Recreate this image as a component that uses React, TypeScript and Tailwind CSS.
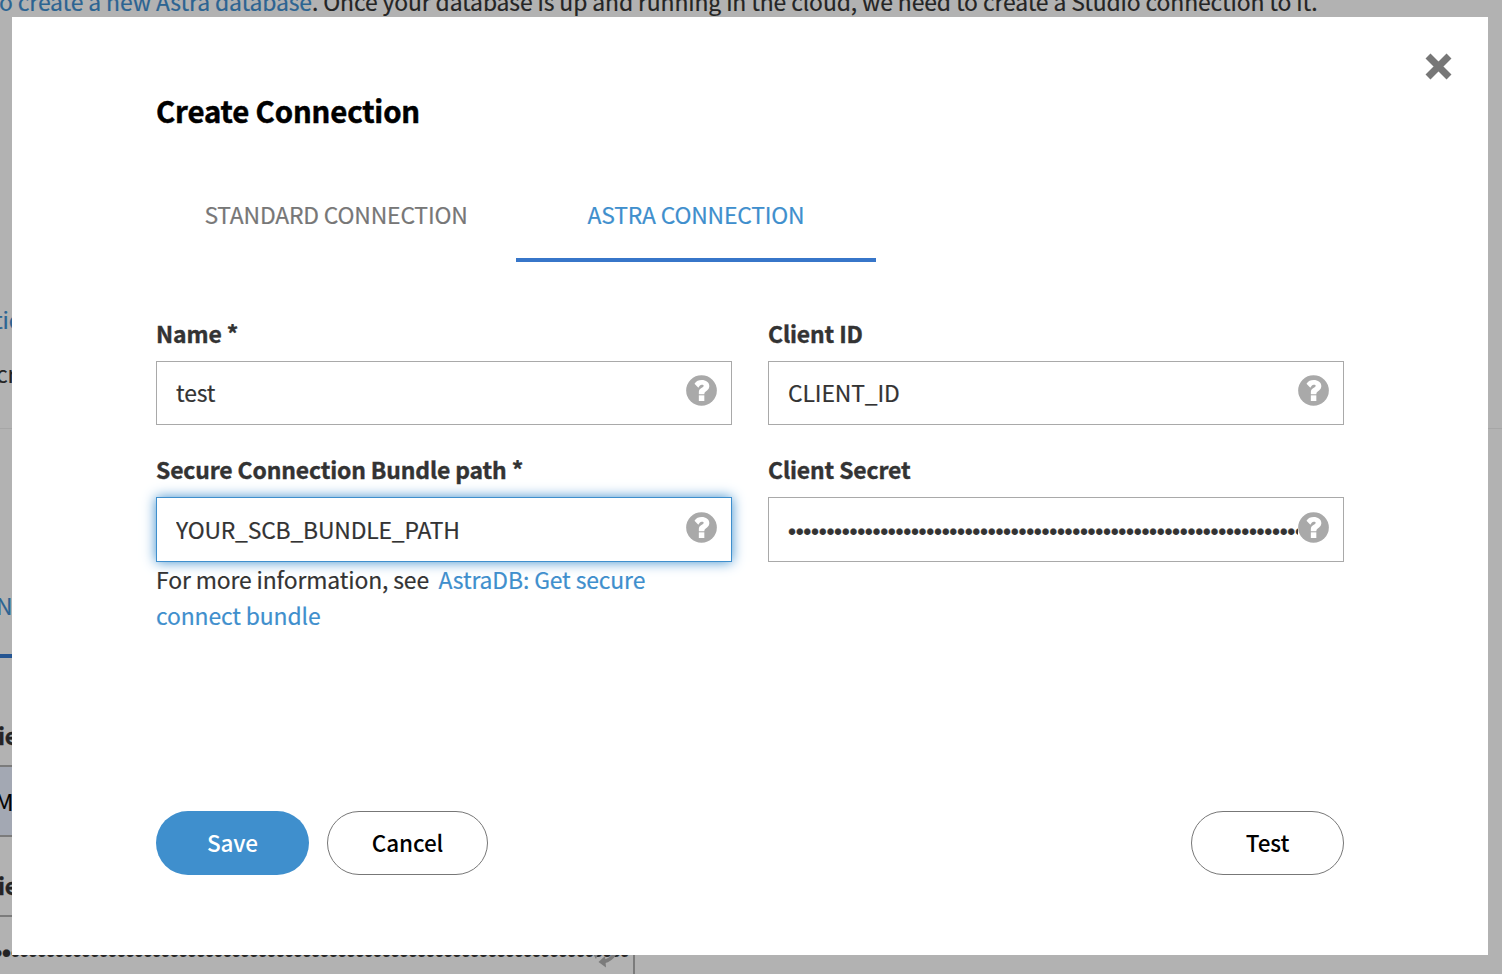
import React from "react";

const FONT = "font-['Noto_Sans_CJK_SC','Noto_Sans',sans-serif]";

function HelpIcon() {
  return (
    <svg className="h-[31px] w-[31px] shrink-0" viewBox="0 0 93 93">
      <circle cx="46.5" cy="46.5" r="46" fill="#a9a9a9" />
      <path
        d="M25.500 26.500C31 18 38 15 47 15C60 15 70 22.500 70 33C70 42.500 63 46.500 58.500 50C55.500 52.500 55 54.500 55 58H38.500V51C38.500 44 43 41.500 47.500 38.500C51.500 36 53 34.500 53 32C53 30 50 29 47 29.500C43 30 40.500 33 37 38Z"
        fill="#fff"
      />
      <rect x="38.500" y="61" width="16.500" height="17" fill="#fff" />
    </svg>
  );
}

type FieldProps = {
  label: string;
  boxClass: string;
  iconClass?: string;
  children: React.ReactNode;
};

function Field({ label, boxClass, iconClass = "-mt-[5px]", children }: FieldProps) {
  return (
    <div className="flex w-[576px] flex-col">
      <label className="block h-9 leading-9 font-bold whitespace-nowrap text-[#333] [-webkit-text-stroke:0.4px_#333]">
        {label}
      </label>
      <div className={`mt-[10px] flex items-center justify-between border bg-white pr-[14px] pl-[19px] ${boxClass}`}>
        <div className="-mt-[2px] w-[511px] overflow-hidden leading-9 whitespace-nowrap text-[#333]">{children}</div>
        <div className={iconClass}>
          <HelpIcon />
        </div>
      </div>
    </div>
  );
}

function Backdrop() {
  return (
    <div className="flex h-full w-full flex-col leading-9 whitespace-nowrap text-[#242424]">
      <p className="-mt-[17px] -ml-[1px] h-9 shrink-0 tracking-[-0.105px]">
        <span className="text-[#2c6492]">o create a new Astra database</span>
        <span>. Once your database is up and running in the cloud, we need to create a Studio connection to it.</span>
      </p>
      <div className="mt-[282px] -ml-[6px] h-9 shrink-0 text-[#2c6492]">tic</div>
      <div className="mt-[18px] -ml-[4px] h-9 shrink-0">cr</div>
      <div className="mt-[37px] h-px shrink-0 bg-[#a6a6a6]" />
      <div className="mt-[158px] -ml-[4px] h-9 shrink-0 text-[#2c6492]">N</div>
      <div className="mt-[31px] h-[4px] w-3 shrink-0 bg-[#255592]" />
      <div className="mt-[59px] -ml-[2px] h-9 shrink-0 font-bold [-webkit-text-stroke:0.4px_#242424]">ie</div>
      <div className="mt-[12px] flex h-[72px] w-[635px] shrink-0 items-center border-y-2 border-[#7b7b7b] bg-[#a3a8b3] text-black">
        <span className="-ml-[5px]">M</span>
      </div>
      <div className="mt-[30px] -ml-[2px] h-9 shrink-0 font-bold [-webkit-text-stroke:0.4px_#242424]">ie</div>
      <div className="mt-[12px] flex h-[80px] w-[635px] shrink-0 border-t-2 border-r-2 border-[#7b7b7b]">
        <span className="mt-[18px] -ml-[7px] font-['Liberation_Sans',sans-serif] text-[27px] tracking-[-0.62px]">
          {"•".repeat(72)}
        </span>
      </div>
    </div>
  );
}

export default function App() {
  return (
    <div
      className={`relative h-[974px] w-[1502px] overflow-hidden bg-[#b2b2b2] text-[22.9px] tracking-[-0.12px] [-webkit-text-stroke:0.2px_currentColor] ${FONT}`}
    >
      <Backdrop />
      <svg className="absolute top-[950px] left-[590px] h-[20px] w-[30px]" viewBox="0 0 30 20">
        <path d="M24.500 4C22 8 19 10.500 14 11.500" fill="none" stroke="#7b7b7b" strokeWidth="3.500" />
        <path d="M8.500 12L15 6L16 17.500Z" fill="#7b7b7b" />
        <path d="M3 4H8L6 9Z" fill="#7b7b7b" />
      </svg>

      <div
        role="dialog"
        className="absolute top-[17px] left-[12px] flex h-[938px] w-[1476px] flex-col bg-white pr-[144px] pl-[144px]"
      >
        <button aria-label="Close" className="absolute top-[36px] left-[1413px] h-[27px] w-[27px]">
          <svg className="h-[27px] w-[27px]" viewBox="0 0 27 27">
            <path d="M3 3L24 24M24 3L3 24" stroke="#777" strokeWidth="7" />
          </svg>
        </button>

        <h1 className="mt-[73px] h-10 shrink-0 text-[29.3px] leading-10 font-bold whitespace-nowrap text-black [-webkit-text-stroke:0.5px_#000]">
          Create Connection
        </h1>

        <div className="mt-[67px] flex h-[65px] shrink-0 text-center leading-[35px] tracking-[-0.18px] whitespace-nowrap">
          <div className="w-[360px] text-[#777]">STANDARD CONNECTION</div>
          <div className="w-[360px] border-b-4 border-[#3776c9] text-[#3f8fcd]">ASTRA CONNECTION</div>
        </div>

        <div className="mt-[53px] flex shrink-0 gap-9">
          <Field label="Name *" boxClass="h-[64px] border-[#a9a9a9]">
            test
          </Field>
          <Field label="Client ID" boxClass="h-[64px] border-[#a9a9a9]">
            CLIENT_ID
          </Field>
        </div>

        <div className="mt-[26px] flex shrink-0 gap-9">
          <div className="flex flex-col">
            <Field
              label="Secure Connection Bundle path *"
              boxClass="h-[65px] border-[#3f8fcd] shadow-[0_0_12px_#3f8fcd]"
              iconClass="-mt-[4px]"
            >
              <span className="tracking-[-0.18px]">YOUR_SCB_BUNDLE_PATH</span>
            </Field>
            <p className="relative -mt-px leading-9 whitespace-nowrap text-[#333]">
              For more information, see <a className="ml-[4.5px] text-[#3f8fcd]">AstraDB: Get secure</a>
              <br />
              <a className="text-[#3f8fcd]">connect bundle</a>
            </p>
          </div>
          <Field label="Client Secret" boxClass="h-[65px] border-[#a9a9a9]" iconClass="-mt-[4px]">
            <span className="mt-[7px] block font-['Liberation_Sans',sans-serif] text-[23px] tracking-[-0.37px]">
              {"•".repeat(67)}
            </span>
          </Field>
        </div>

        <div className="mt-[178px] flex h-16 shrink-0 text-[22.5px] leading-9 font-medium text-black [-webkit-text-stroke:0px]">
          <button className="w-[153px] rounded-full bg-[#3f8fcd] pb-[2px] text-white">Save</button>
          <button className="ml-[18px] w-[161px] rounded-full border border-[#777] pb-[2px]">Cancel</button>
          <button className="ml-auto w-[153px] rounded-full border border-[#777] pb-[2px]">Test</button>
        </div>
      </div>
    </div>
  );
}
